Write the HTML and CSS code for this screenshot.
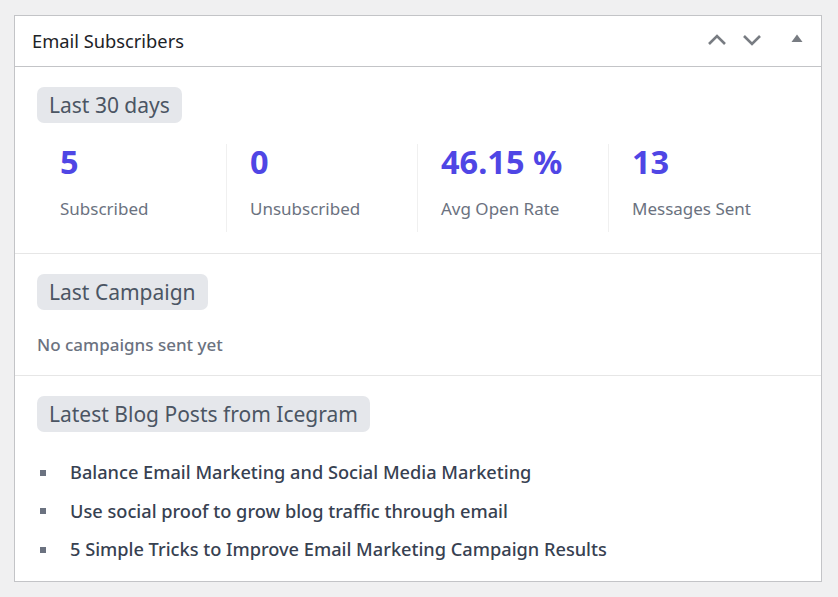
FILE: index.html
```html
<!DOCTYPE html>
<html lang="en">
<head>
    <meta charset="UTF-8">
    <meta name="viewport" content="width=device-width, initial-scale=1.0">
    <title>Dashboard</title>
    <link rel="stylesheet" href="styles.css">
</head>
<body>
    <div class="postbox">
        <div class="postbox-header">
            <h2>Email Subscribers</h2>
            <div class="handle-actions">
                <button class="handle-btn" title="Move up">
                    <svg width="20" height="14" viewBox="0 0 20 14"><path d="M2 11 L10 3 L18 11" fill="none" stroke="#787c82" stroke-width="2.6"/></svg>
                </button>
                <button class="handle-btn" title="Move down">
                    <svg width="20" height="14" viewBox="0 0 20 14"><path d="M2 3 L10 11 L18 3" fill="none" stroke="#787c82" stroke-width="2.6"/></svg>
                </button>
                <button class="handle-btn toggle" title="Toggle panel">
                    <svg width="12" height="10" viewBox="0 0 12 10"><path d="M0.5 9 L6 1.5 L11.5 9 Z" fill="#787c82"/></svg>
                </button>
            </div>
        </div>
        <div class="inside">
            <!-- stats for the last 30 days -->
            <div class="section">
                <span class="pill">Last 30 days</span>
                <div class="stats">
                    <div class="stat">
                        <span class="stat-value">5</span>
                        <span class="stat-label">Subscribed</span>
                    </div>
                    <div class="stat">
                        <span class="stat-value">0</span>
                        <span class="stat-label">Unsubscribed</span>
                    </div>
                    <div class="stat">
                        <span class="stat-value">46.15 %</span>
                        <span class="stat-label">Avg Open Rate</span>
                    </div>
                    <div class="stat">
                        <span class="stat-value">13</span>
                        <span class="stat-label">Messages Sent</span>
                    </div>
                </div>
            </div>
            <div class="section">
                <span class="pill">Last Campaign</span>
                <p class="empty">No campaigns sent yet</p>
            </div>
            <div class="section">
                <span class="pill">Latest Blog Posts from Icegram</span>
                <ul class="posts">
                    <li><a href="#">Balance Email Marketing and Social Media Marketing</a></li>
                    <li><a href="#">Use social proof to grow blog traffic through email</a></li>
                    <li><a href="#">5 Simple Tricks to Improve Email Marketing Campaign Results</a></li>
                </ul>
            </div>
        </div>
    </div>
</body>
</html>
```
FILE: styles.css
```css
body{
    margin: 0;
    padding: 15px 16px 0 14px;
    background-color: #f0f0f1;
    font-family: "Noto Sans", "Open Sans", sans-serif;
}
.postbox{
    width: 806px;
    background-color: #fff;
    border: 1px solid #c3c4c7;
}
.postbox-header{
    height: 50px;
    display: flex;
    align-items: center;
    justify-content: space-between;
    border-bottom: 1px solid #c3c4c7;
    padding: 0 18px 0 17px;
}
.postbox-header h2{
    margin: -1px 0 0;
    font-size: 18.3px;
    font-weight: 400;
    color: #1d2327;
}
.handle-actions{
    display: flex;
    align-items: center;
    margin-top: -2px;
}
.handle-btn{
    background: none;
    border: none;
    padding: 0;
    margin-left: 15px;
    display: flex;
}
.handle-btn.toggle{
    margin-left: 29px;
    margin-top: -4px;
}
.section{
    padding: 20px 22px 21px;
    border-bottom: 1px solid #e6e6e6;
}
.section:nth-child(2){
    padding-bottom: 18px;
}
.section:last-child{
    border-bottom: none;
    padding-bottom: 12px;
}
.pill{
    display: inline-block;
    vertical-align: top;
    background-color: #e5e7eb;
    color: #4b5563;
    border-radius: 7px;
    padding: 0 12px;
    height: 36px;
    line-height: 36px;
    font-size: 21px;
}
.stats{
    display: grid;
    grid-template-columns: repeat(4, 1fr);
    margin: 21px 0 0 -2px;
}
.stat{
    display: flex;
    flex-direction: column;
    padding: 0 23px;
    height: 88px;
    border-left: 1px solid #f0f0f0;
}
.stat:first-child{
    border-left: none;
    padding-left: 25px;
}
.stat-value{
    font-size: 32.5px;
    font-weight: 700;
    color: #4f46e5;
    line-height: 36px;
}
.stat-label{
    margin-top: 17px;
    font-size: 17px;
    color: #6b7280;
}
.empty{
    margin: 23px 0 0;
    line-height: 24px;
    font-size: 17px;
    font-weight: 500;
    color: #6b7280;
}
.posts{
    list-style: none;
    margin: 21px 0 0;
    padding: 0;
}
.posts li{
    display: flex;
    align-items: center;
    height: 38.5px;
    font-size: 18.2px;
}
.posts li::before{
    content: "";
    width: 6px;
    height: 6px;
    margin: 1px 24px 0 3px;
    background-color: #6b7280;
}
.posts a{
    color: #374151;
    text-decoration: none;
    font-weight: 500;
}
```
